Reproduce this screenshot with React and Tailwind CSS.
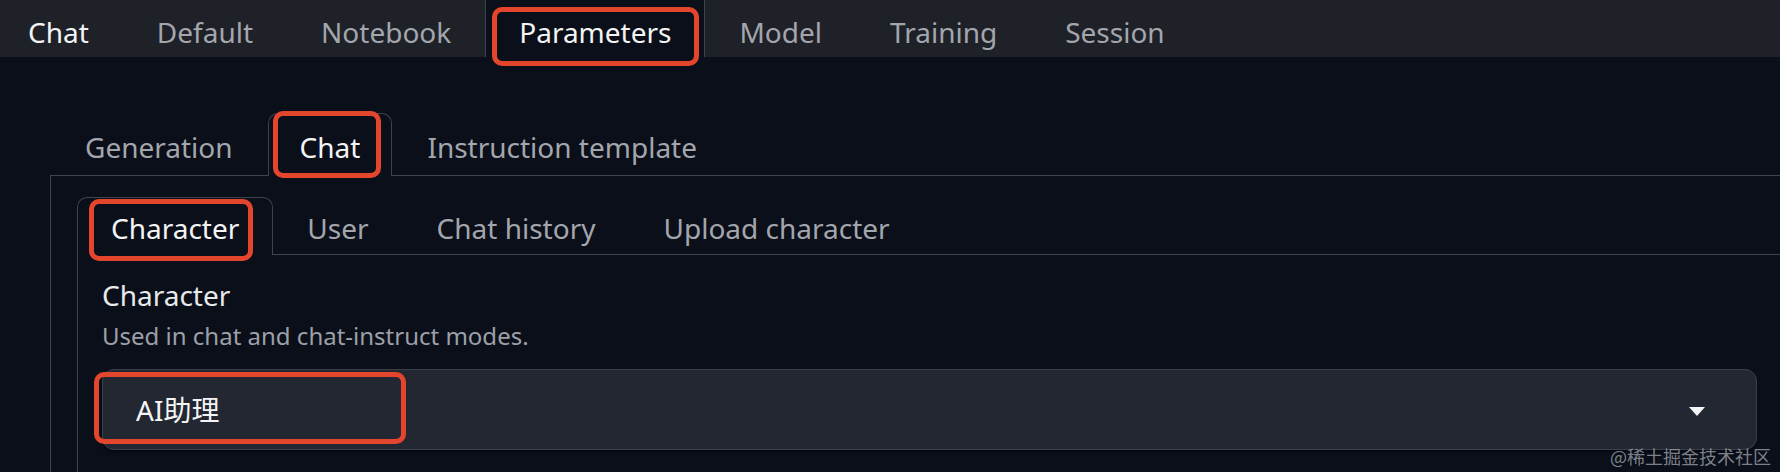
import React from "react";

const topTabs = ["Chat", "Default", "Notebook", "Parameters", "Model", "Training", "Session"];
const paramTabs = ["Generation", "Chat", "Instruction template"];
const chatTabs = ["Character", "User", "Chat history", "Upload character"];

// red annotation frame drawn over a tab / field
function Mark({ className }) {
  return (
    <span
      className={`pointer-events-none absolute z-20 rounded-[10px] border-[5px] border-[#e4452d] ${className}`}
    />
  );
}

function App() {
  return (
    <div className="relative w-[1780px] h-[472px] overflow-hidden bg-[#0b0f19] font-['Noto_Sans','Noto_Sans_CJK_SC',sans-serif]">
      {/* main nav */}
      <nav className="h-[57px] bg-[#1f2128]">
        <div className="flex ml-[-6px] text-[28px]">
          {topTabs.map((t, i) => {
            const active = t === "Parameters";
            return (
              <div
                key={t}
                className={`relative h-[57px] px-[33px] pt-[7px] leading-[50px] border-x whitespace-nowrap ${
                  active ? "bg-[#0b0f19] border-[#3f434b]" : "border-transparent"
                } ${active || i === 0 ? "text-[#f4f4f5]" : "text-[#a3a6ad]"}`}
              >
                {t}
                {active && <Mark className="left-[6px] right-[5px] top-[7px] bottom-[-9px]" />}
              </div>
            );
          })}
        </div>
      </nav>

      <div className="ml-[50px] mt-[56px] w-[1760px]">
        {/* parameters sub tabs */}
        <div className="flex border-b border-[#3f434b] text-[28px]">
          {paramTabs.map((t) => {
            const active = t === "Chat";
            return (
              <div
                key={t}
                className={`relative h-[63px] -mb-px pt-[5px] leading-[56px] border-x border-t whitespace-nowrap ${
                  active
                    ? "px-[31px] bg-[#0b0f19] border-[#3f434b] rounded-t-[10px] text-[#f4f4f5]"
                    : "px-[34px] border-transparent text-[#a3a6ad]"
                }`}
              >
                {t}
                {active && <Mark className="left-[4px] right-[10px] top-[-3px] bottom-[-2px]" />}
              </div>
            );
          })}
        </div>

        <div className="border-x border-[#3f434b] pl-[26px] pt-[21px] pb-[80px]">
          <div className="w-[1705px]">
            {/* chat sub tabs */}
            <div className="flex border-b border-[#3f434b] text-[28px]">
              {chatTabs.map((t) => {
                const active = t === "Character";
                return (
                  <div
                    key={t}
                    className={`relative h-[58px] -mb-px px-[33px] pt-[3px] leading-[54px] border-x border-t whitespace-nowrap ${
                      active
                        ? "bg-[#0b0f19] border-[#3f434b] rounded-t-[10px] text-[#f4f4f5]"
                        : "border-transparent text-[#a3a6ad]"
                    }`}
                  >
                    {t}
                    {active && <Mark className="left-[11px] right-[19px] top-[1px] bottom-[-6px]" />}
                  </div>
                );
              })}
            </div>

            <div className="border-x border-[#3f434b] px-6 pt-[21px] pb-[60px]">
              <div className="text-[28px] leading-[38px] text-[#e8e9eb]">Character</div>
              <div className="mt-[6px] text-[24px] leading-[32px] text-[#9ca0a8]">
                Used in chat and chat-instruct modes.
              </div>
              <div className="relative mt-[17px] h-[81px] flex items-center justify-between rounded-[12px] border border-[#3a3f49] bg-[#222731] pl-[33px] pr-[51px] shadow-[0_2px_3px_rgba(0,0,0,0.45)]">
                <span className="text-[28px] text-[#f4f4f5]">AI助理</span>
                <svg width="16" height="9" viewBox="0 0 16 9" className="mt-[3px]">
                  <path d="M0 0H16L8 9Z" fill="#f4f4f5" />
                </svg>
                <Mark className="left-[-9px] top-[2px] w-[312px] h-[72px]" />
              </div>
            </div>
          </div>
        </div>
      </div>

      <div className="absolute right-[9px] bottom-[7px] text-[18px] leading-none text-[#9ca0a8]/80 font-['Noto_Sans_CJK_SC',sans-serif]">
        @稀土掘金技术社区
      </div>
    </div>
  );
}

export default App;
